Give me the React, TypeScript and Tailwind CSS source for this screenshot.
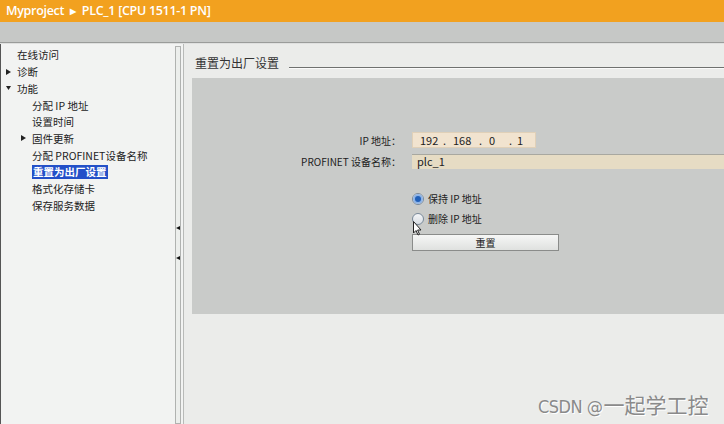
import React from 'react';

const cjk = { fontFamily: '"Noto Sans CJK SC", "Noto Sans", sans-serif' };

const tree = [
  { label: '在线访问', indent: 17 },
  { label: '诊断', indent: 17, arrow: 'right' },
  { label: '功能', indent: 17, arrow: 'down' },
  { label: '分配 IP 地址', indent: 32 },
  { label: '设置时间', indent: 32 },
  { label: '固件更新', indent: 32, arrow: 'right' },
  { label: '分配 PROFINET设备名称', indent: 32 },
  { label: '重置为出厂设置', indent: 32, selected: true },
  { label: '格式化存储卡', indent: 32 },
  { label: '保存服务数据', indent: 32 },
];

function Arrow({ dir }: { dir: string }) {
  return (
    <svg width="5" height="6" viewBox="0 0 5 6" className="absolute" style={{ left: 0 }}>
      {dir === 'right' ? <path d="M0 0 L5 3 L0 6 Z" fill="#222" /> : <path d="M0 1 L5 1 L2.5 5 Z" fill="#222" />}
    </svg>
  );
}

function Radio({ checked }: { checked?: boolean }) {
  return (
    <span className="w-[12px] h-[12px] rounded-full border border-[#7a8a9a] bg-gradient-to-b from-[#f4f6f8] to-[#d8dde2] flex items-center justify-center">
      {checked && <span className="w-[6px] h-[6px] rounded-full bg-[#1f5fb8] ring-2 ring-[#8fb4e6]" />}
    </span>
  );
}

export default function App() {
  return (
    <div className="w-[724px] h-[424px] relative overflow-hidden flex flex-col bg-[#e8e9e8] text-[#222]" style={cjk}>
      {/* title bar */}
      <div className="h-[22px] bg-[#f2a11f] flex items-center pl-[6px] text-white text-[12.5px] font-semibold tracking-[-0.3px]" style={{ fontFamily: '"Open Sans", sans-serif' }}>
        Myproject <span className="mx-[6px] text-[8px]">▶</span> PLC_1 [CPU 1511-1 PN]
      </div>
      {/* toolbar */}
      <div className="h-[21px] bg-[#c6c8c6] border-b border-[#9a9c9a]" />
      <div className="flex-1 flex border-t border-[#dfe0df]">
        {/* tree */}
        <div className="w-[175px] bg-[#f2f3f2] border-l border-[#555] pt-[3px]">
          {tree.map((t) => (
            <div key={t.label} className="h-[16.7px] flex items-center text-[10.5px] relative" style={{ paddingLeft: t.indent - 1 }}>
              {t.arrow && (
                <span className="absolute top-[5px]" style={{ left: t.indent - 12 }}>
                  <Arrow dir={t.arrow} />
                </span>
              )}
              <span className={t.selected ? 'bg-[#2350c8] text-white px-[1px] leading-[14px] font-semibold' : ''}>{t.label}</span>
            </div>
          ))}
        </div>
        {/* splitter */}
        <div className="w-[8px] bg-[#f2f3f2] relative">
          <div className="absolute left-0 top-[2px] bottom-0 w-[6px] border border-[#b0b2b0] bg-[#eceeec]" />
          <svg className="absolute left-[1px] top-[182px]" width="4" height="4"><path d="M4 0 L0 2 L4 4 Z" fill="#111" /></svg>
          <svg className="absolute left-[1px] top-[212px]" width="4" height="4"><path d="M4 0 L0 2 L4 4 Z" fill="#111" /></svg>
        </div>
        {/* content */}
        <div className="flex-1 border-l border-[#b8bab8] pl-[8px] flex flex-col bg-[#ebecea]">
          <div className="h-[34px] flex items-end pb-[6px] pl-[3px]">
            <span className="text-[12px] text-[#333]">重置为出厂设置</span>
            <div className="flex-1 ml-[10px] mb-[3px] h-[2px] border-t border-[#6f716f] border-b border-b-[#fafafa]" />
          </div>
          <div className="h-[236px] bg-[#c9cbc9] pt-[54px] text-[10px]">
            <div className="flex items-center h-[16px]">
              <span className="w-[210px] text-right pr-[1px]">IP 地址：</span>
              <div className="ml-[10px] w-[124px] h-[16px] bg-[#f1e3cf] border border-[#e0d0b8] flex items-center pl-[7px] text-[11px]">
                <span className="w-[23px]">192</span>
                <span className="w-[10px]">.</span>
                <span className="w-[26px]">168</span>
                <span className="w-[10px]">.</span>
                <span className="w-[20px]">0</span>
                <span className="w-[8px]">.</span>
                <span>1</span>
              </div>
            </div>
            <div className="flex items-center h-[16px] mt-[5px]">
              <span className="w-[210px] text-right pr-[1px]">PROFINET 设备名称：</span>
              <div className="ml-[10px] flex-1 h-[15px] bg-[#e6dcc4] border-t border-[#a8a8a0] flex items-center pl-[5px] text-[11px]">plc_1</div>
            </div>
            <div className="ml-[220px] mt-[22px] flex flex-col gap-[5px]">
              <div className="flex items-center gap-[4px]"><Radio checked /><span>保持 IP 地址</span></div>
              <div className="flex items-center gap-[4px]"><Radio /><span>删除 IP 地址</span></div>
            </div>
            <div className="ml-[220px] mt-[8px] w-[147px] h-[17px] border border-[#8a8c8a] bg-gradient-to-b from-[#f6f7f6] to-[#dfe1df] flex items-center justify-center text-[10px]">
              重置
            </div>
          </div>
        </div>
      </div>
      {/* mouse cursor */}
      <svg className="absolute left-[413px] top-[221px]" width="10" height="16" viewBox="0 0 10 16">
        <path d="M0.5 0.5 L0.5 12 L3 9.5 L5 14 L6.5 13.3 L4.6 9 L8 9 Z" fill="#fff" stroke="#222" strokeWidth="1" />
      </svg>
      {/* watermark */}
      <div className="absolute left-[538px] top-[389px] flex items-baseline text-[#8a8a8a]" style={{ textShadow: '1px 1px 0 #fff' }}>
        <span className="text-[18px] tracking-[-0.5px]" style={{ fontFamily: '"DejaVu Sans Condensed", "Liberation Sans Narrow", sans-serif' }}>CSDN @</span>
        <span className="text-[21px] ml-[1px]">一起学工控</span>
      </div>
    </div>
  );
}
